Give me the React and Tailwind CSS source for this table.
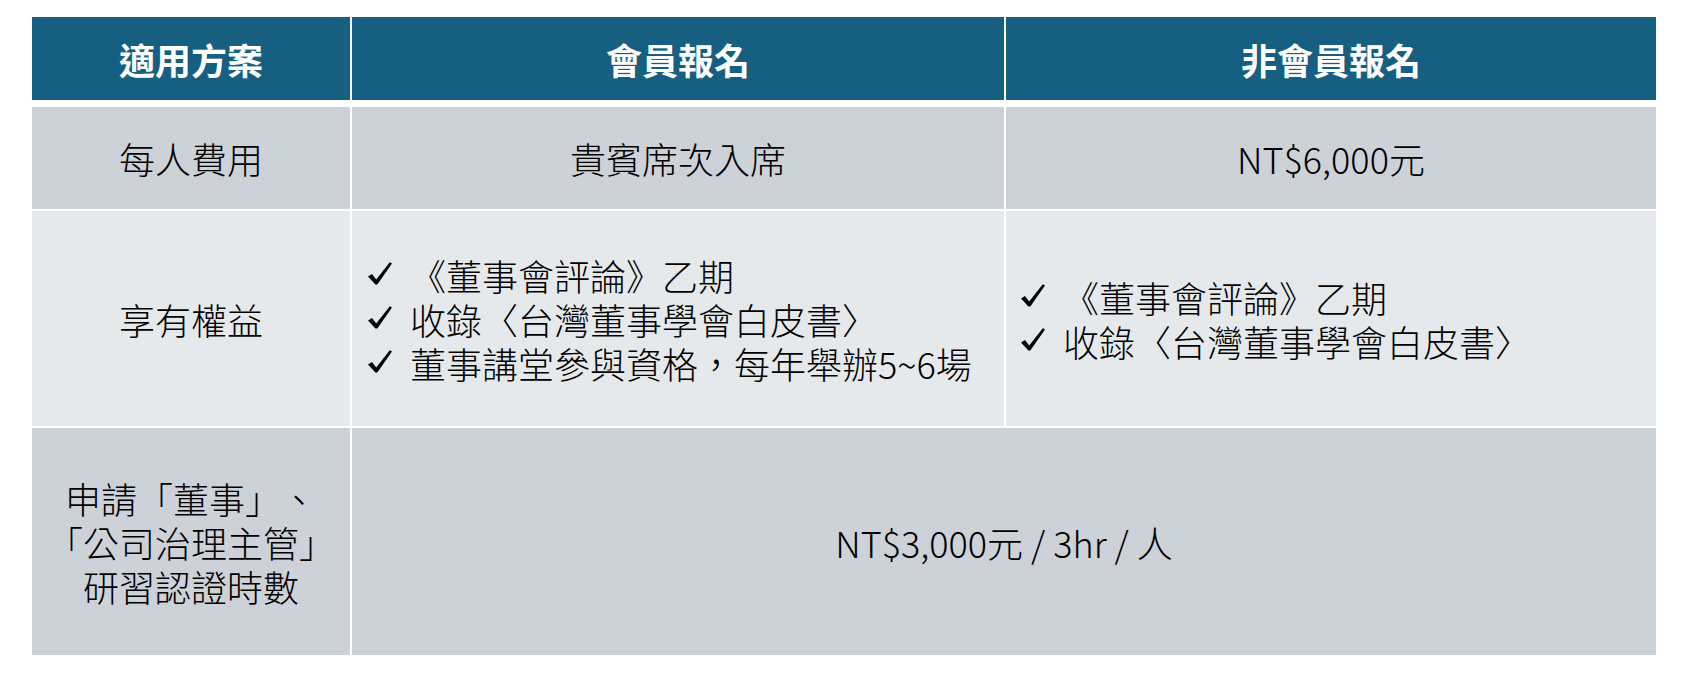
import React from "react";

function Check({ children }) {
  return (
    <div className="flex items-center">
      <span className="w-[42px] shrink-0 flex items-center">
        <svg width="24" height="23" viewBox="0 0 24 23" className="mt-[-2px]">
          <path d="M0 14.5 L4 12 L8.2 17.6 L21.8 0.3 L24 1.6 L9.3 22.6 L7.4 22.6 Z" fill="#000" />
        </svg>
      </span>
      <span>{children}</span>
    </div>
  );
}

export default function App() {
  return (
    <div className="w-[1684px] h-[681px] bg-white pt-[17px] pl-[32px] text-[36px] text-black font-light font-['Noto_Sans_CJK_TC','Noto_Sans',sans-serif] [text-spacing-trim:space-all]">
      <div className="w-[1624px] flex flex-col">
        {/* header */}
        <div className="grid grid-cols-[318px_652px_650px] gap-x-[2px] h-[83px]">
          <div className="bg-[#175f80] flex items-center justify-center text-white font-bold">適用方案</div>
          <div className="bg-[#175f80] flex items-center justify-center text-white font-bold">會員報名</div>
          <div className="bg-[#175f80] flex items-center justify-center text-white font-bold">非會員報名</div>
        </div>
        {/* row 1 */}
        <div className="grid grid-cols-[318px_652px_650px] gap-x-[2px] h-[102px] mt-[7px]">
          <div className="bg-[#cdd1d8] flex items-center justify-center">每人費用</div>
          <div className="bg-[#cdd1d8] flex items-center justify-center">貴賓席次入席</div>
          <div className="bg-[#cdd1d8] flex items-center justify-center">NT$6,000元</div>
        </div>
        {/* row 2 */}
        <div className="grid grid-cols-[318px_652px_650px] gap-x-[2px] h-[215px] mt-[2px]">
          <div className="bg-[#e6e9ec] flex items-center justify-center">享有權益</div>
          <div className="bg-[#e6e9ec] flex flex-col justify-center pl-[16px] leading-[44px]">
            <Check>《董事會評論》乙期</Check>
            <Check>收錄〈台灣董事學會白皮書〉</Check>
            <Check>董事講堂參與資格，每年舉辦5~6場</Check>
          </div>
          <div className="bg-[#e6e9ec] flex flex-col justify-center pl-[15px] leading-[44px]">
            <Check>《董事會評論》乙期</Check>
            <Check>收錄〈台灣董事學會白皮書〉</Check>
          </div>
        </div>
        {/* row 3 */}
        <div className="grid grid-cols-[318px_652px_650px] gap-x-[2px] h-[227px] mt-[2px]">
          <div className="bg-[#cdd1d8] flex flex-col items-center justify-center leading-[44px] text-center">
            <div>申請「董事」、</div>
            <div>「公司治理主管」</div>
            <div>研習認證時數</div>
          </div>
          <div className="col-span-2 bg-[#cdd1d8] flex items-center justify-center">NT$3,000元 / 3hr / 人</div>
        </div>
      </div>
    </div>
  );
}
